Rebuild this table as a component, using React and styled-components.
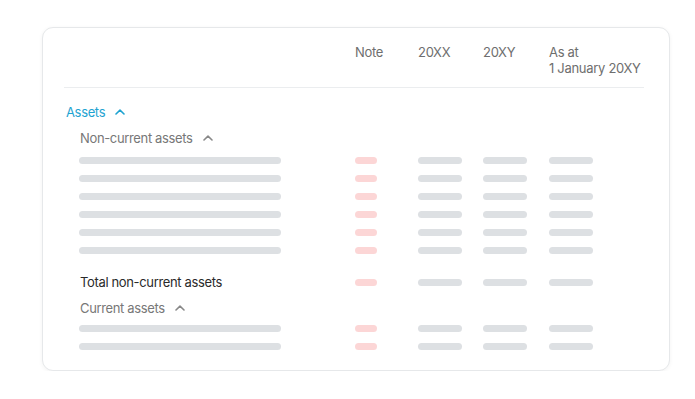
import { createGlobalStyle, styled } from "styled-components";

const GlobalStyle = createGlobalStyle`
  body {
    margin: 0;
    background: #ffffff;
    font-family: "Inter", "Liberation Sans", sans-serif;
  }
`;

const Page = styled.div`
  padding: 27px 0 0 42px;
`;

const Card = styled.div`
  box-sizing: border-box;
  width: 628px;
  height: 344px;
  padding: 16px 25px 17px 21px;
  background: #fff;
  border: 1px solid #e6e8ea;
  border-radius: 11px;
  box-shadow: 0 1px 4px rgba(0, 0, 0, 0.05);
`;

const Row = styled.div`
  display: grid;
  grid-template-columns: 291px 63px 65px 66px 1fr;
  align-items: center;
  height: ${({ h }) => h || 18}px;
  margin-top: ${({ mt }) => mt || 0}px;
`;

const HeadRow = styled(Row)`
  align-items: start;
  height: auto;
  padding-bottom: 11px;
  border-bottom: 1px solid #ebedef;
`;

const HeadCell = styled.div`
  font-size: 13px;
  line-height: 16px;
  color: #6e6e6e;
  letter-spacing: -0.3px;
`;

const Label = styled.div`
  display: flex;
  align-items: center;
  gap: 10px;
  padding-left: ${({ indent }) => indent || 0}px;
  font-size: 13px;
  line-height: 16px;
  letter-spacing: -0.35px;
  color: ${({ color }) => color || "#777"};
`;

const Bar = styled.div`
  width: ${({ w }) => w}px;
  height: 7px;
  border-radius: 4px;
  background: ${({ pink }) => (pink ? "#fcd6d6" : "#dde0e3")};
`;

const LabelBar = styled(Bar)`
  margin-left: 15px;
`;

const Spacer = styled.div`
  height: ${({ h }) => h}px;
`;

const Chevron = ({ color }) => (
  <svg width="10" height="6" viewBox="0 0 10 6" fill="none">
    <path d="M1 5 L5 1.2 L9 5" stroke={color} strokeWidth="1.6" strokeLinecap="round" strokeLinejoin="round" />
  </svg>
);

const DataRow = ({ label, mt }) => (
  <Row mt={mt}>
    {label ? <Label indent={16} color="#2a2a2a">{label}</Label> : <LabelBar w={202} />}
    <Bar w={22} pink />
    <Bar w={44} />
    <Bar w={44} />
    <Bar w={44} />
  </Row>
);

export default function App() {
  return (
    <>
      <GlobalStyle />
      <Page>
        <Card>
          <HeadRow>
            <div />
            <HeadCell>Note</HeadCell>
            <HeadCell>20XX</HeadCell>
            <HeadCell>20XY</HeadCell>
            <HeadCell>
              As at
              <br />1 January 20XY
            </HeadCell>
          </HeadRow>

          <Row h={16} mt={16}>
            <Label indent={2} color="#1fa3d1">
              Assets <Chevron color="#1fa3d1" />
            </Label>
          </Row>
          <Row h={16} mt={10}>
            <Label indent={16}>
              Non-current assets <Chevron color="#888" />
            </Label>
          </Row>
          <Spacer h={5} />
          {[0, 1, 2, 3, 4, 5].map((i) => (
            <DataRow key={i} />
          ))}
          <DataRow label="Total non-current assets" mt={14} />
          <Row h={16} mt={9}>
            <Label indent={16}>
              Current assets <Chevron color="#888" />
            </Label>
          </Row>
          <Spacer h={3} />
          <DataRow />
          <DataRow />
        </Card>
      </Page>
    </>
  );
}
